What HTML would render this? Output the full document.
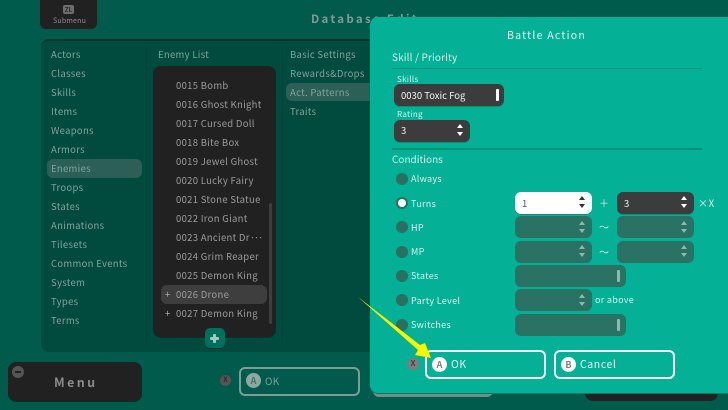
<!DOCTYPE html>
<html><head><meta charset="utf-8"><style>
*{box-sizing:border-box;margin:0;padding:0}
html,body{width:728px;height:410px;overflow:hidden;background:#005b4d}
body{position:relative;font-family:"Noto Sans CJK JP","Liberation Sans",sans-serif;font-size:9.5px;letter-spacing:.3px;-webkit-font-smoothing:antialiased}
.a{position:absolute;white-space:nowrap}
.t{position:absolute;white-space:nowrap;line-height:14px;height:14px}
.l{color:#83a39c}
.e{color:#9b9b9b;left:176px}
.w{color:#d8f3ec}
.s{font-size:9px;letter-spacing:.3px}
.m{font-size:10px;letter-spacing:.15px}
.k{font-size:8px;letter-spacing:.3px}
.box{position:absolute;border-radius:6px;height:22px;background:#2a7264}
.dk{background:#3c3c3c;box-shadow:0 1px 0 #079179}
.r{position:absolute;left:396px;width:12px;height:12px;border-radius:50%;background:#2a6f60}
.u,.d{position:absolute;width:0;height:0;border-left:3px solid transparent;border-right:3px solid transparent}
.u{border-bottom:4px solid #8fb9af}.d{border-top:4px solid #8fb9af}
.bar{position:absolute;width:3px;height:13px;background:#8fb9af;border-radius:1px}
.btn{position:absolute;top:350px;height:29px;border:2px solid #fff;border-radius:6px}
.ci{position:absolute;width:15px;height:15px;border-radius:50%;background:#fff;color:#7d7d7d;font-size:9px;font-weight:700;text-align:center;line-height:15px;letter-spacing:0}
</style></head><body>
<div class="a" style="left:40px;top:-5px;width:57px;height:34px;background:#212121;border-radius:0 0 6px 6px"></div>
<div class="a" style="left:63px;top:5px;width:11px;height:9px;background:#6e6e6e;border-radius:2px;color:#2b2b2b;font-size:6.5px;font-weight:700;line-height:9px;text-align:center;letter-spacing:0">ZL</div>
<div class="t" style="left:53px;top:14px;font-size:7px;letter-spacing:.2px;color:#8e8e8e">Submenu</div>
<div class="t" style="left:311px;top:12px;font-size:11.500px;font-weight:700;letter-spacing:2.3px;color:#7c9d96;line-height:14px">Database Edit</div>

<div class="a" style="left:41px;top:39px;width:340px;height:313px;background:#004a3e;border-radius:8px;border-top:2px solid #00352c"></div>
<div class="a" style="left:146px;top:46px;width:1px;height:298px;background:#00443a"></div>
<div class="a" style="left:282px;top:46px;width:1px;height:298px;background:#00443a"></div>
<div class="a" style="left:47px;top:159px;width:95px;height:19px;background:#2c5f55;border-radius:6px"></div>
<div class="a" style="left:286px;top:83px;width:90px;height:18px;background:#2c5f55;border-radius:6px"></div>

<div class="t l" style="left:51px;top:47px">Actors</div>
<div class="t l" style="left:51px;top:66px">Classes</div>
<div class="t l" style="left:51px;top:85px">Skills</div>
<div class="t l" style="left:51px;top:104px">Items</div>
<div class="t l" style="left:51px;top:123px">Weapons</div>
<div class="t l" style="left:51px;top:142px">Armors</div>
<div class="t l" style="left:51px;top:161px">Enemies</div>
<div class="t l" style="left:51px;top:180px">Troops</div>
<div class="t l" style="left:51px;top:199px">States</div>
<div class="t l" style="left:51px;top:218px">Animations</div>
<div class="t l" style="left:51px;top:237px">Tilesets</div>
<div class="t l" style="left:51px;top:256px">Common Events</div>
<div class="t l" style="left:51px;top:275px">System</div>
<div class="t l" style="left:51px;top:294px">Types</div>
<div class="t l" style="left:51px;top:313px">Terms</div>

<div class="t l" style="left:158px;top:47px">Enemy List</div>
<div class="t l" style="left:290px;top:47px">Basic Settings</div>
<div class="t l" style="left:290px;top:66px">Rewards&amp;Drops</div>
<div class="t l" style="left:290px;top:85px">Act. Patterns</div>
<div class="t l" style="left:290px;top:104px">Traits</div>

<div class="a" style="left:153px;top:66px;width:123px;height:271px;background:#212121;border-radius:8px;box-shadow:0 1px 0 #00352c"></div>
<div class="a" style="left:161px;top:285px;width:106px;height:19px;background:#3e3e3e;border-radius:6px"></div>
<div class="a" style="left:269px;top:203px;width:3px;height:121px;background:#3e3e3e;border-radius:2px"></div>
<div class="t e" style="top:78px">0015 Bomb</div>
<div class="t e" style="top:97px">0016 Ghost Knight</div>
<div class="t e" style="top:116px">0017 Cursed Doll</div>
<div class="t e" style="top:135px">0018 Bite Box</div>
<div class="t e" style="top:154px">0019 Jewel Ghost</div>
<div class="t e" style="top:173px">0020 Lucky Fairy</div>
<div class="t e" style="top:192px">0021 Stone Statue</div>
<div class="t e" style="top:211px">0022 Iron Giant</div>
<div class="t e" style="top:230px">0023 Ancient Dr<span style="letter-spacing:-1.2px">···</span></div>
<div class="t e" style="top:249px">0024 Grim Reaper</div>
<div class="t e" style="top:268px">0025 Demon King</div>
<div class="t e" style="top:287px">0026 Drone</div>
<div class="t e" style="top:306px">0027 Demon King</div>
<div class="t e" style="left:165px;top:287px;color:#b5b5b5">+</div>
<div class="t e" style="left:165px;top:306px;color:#b5b5b5">+</div>
<div class="a" style="left:205px;top:328px;width:20px;height:20px;background:#00705e;border-radius:5px;box-shadow:0 1px 0 #00352c"></div>
<div class="a" style="left:210px;top:337px;width:9px;height:2.500px;background:#a9c5bf;border-radius:1px"></div>
<div class="a" style="left:213.250px;top:333.500px;width:2.500px;height:9px;background:#a9c5bf;border-radius:1px"></div>

<div class="a" style="left:8px;top:362px;width:134px;height:39px;background:#212121;border-radius:8px;box-shadow:0 1px 0 #00352c"></div>
<div class="a" style="left:12px;top:366px;width:12px;height:12px;border-radius:50%;background:#555"></div>
<div class="a" style="left:15px;top:371px;width:6px;height:2px;background:#222"></div>
<div class="t" style="left:54px;top:374px;font-size:12.500px;font-weight:700;letter-spacing:2.4px;color:#8a8a8a;line-height:15px;height:15px">Menu</div>
<div class="a" style="left:220px;top:375px;width:11px;height:11px;border-radius:50%;background:#555;color:#2b2b2b;font-size:7px;font-weight:700;line-height:11px;text-align:center;letter-spacing:0">X</div>
<div class="a" style="left:239px;top:367px;width:121px;height:29px;border:2px solid #7c9d96;border-radius:6px"></div>
<div class="ci" style="left:246px;top:373px;background:#8ba8a2;color:#4d6f68">A</div>
<div class="t" style="left:265px;top:374px;color:#7c9d96;font-size:10px">OK</div>
<div class="a" style="left:373px;top:385px;width:120px;height:12px;background:#6f8f88;border-radius:6px"></div>
<div class="a" style="left:585px;top:385px;width:133px;height:16px;background:#212121;border-radius:8px"></div>

<div class="a" style="left:370px;top:17px;width:370px;height:376px;background:#04b096;border-radius:8px;box-shadow:0 1px 0 #067a68"></div>
<div class="t" style="left:507px;top:28.500px;font-size:10.500px;letter-spacing:1.250px;color:#e6f8f4">Battle Action</div>
<div class="t w m" style="left:392px;top:50px">Skill / Priority</div>
<div class="a" style="left:392px;top:68px;width:310px;height:1px;background:#079079"></div>
<div class="t w k" style="left:397px;top:72.500px">Skills</div>
<div class="box dk" style="left:394px;top:84px;width:110px"></div>
<div class="t" style="left:401px;top:88px;color:#f2f2f2;letter-spacing:0">0030 Toxic Fog</div>
<div class="bar" style="left:496px;top:89px;background:#fff;height:12px"></div>
<div class="t w k" style="left:397px;top:107.500px">Rating</div>
<div class="box dk" style="left:394px;top:120px;width:76px"></div>
<div class="t" style="left:401px;top:123px;color:#f2f2f2">3</div>
<div class="u" style="left:457px;top:124px;border-bottom-color:#fff"></div><div class="d" style="left:457px;top:132px;border-top-color:#fff"></div>
<div class="a" style="left:392px;top:148px;width:310px;height:2px;background:#079079"></div>
<div class="t w m" style="left:392px;top:152px;letter-spacing:0">Conditions</div>

<div class="r" style="top:172.500px"></div><div class="t w s" style="left:411px;top:171.500px">Always</div>
<div class="r" style="top:196.500px"></div><div class="a" style="left:398px;top:198.500px;width:8px;height:8px;background:#fff;border-radius:50%"></div><div class="t w s" style="left:411px;top:196.500px">Turns</div>
<div class="r" style="top:221px"></div><div class="t w s" style="left:411px;top:220.500px">HP</div>
<div class="r" style="top:245.500px"></div><div class="t w s" style="left:411px;top:245px">MP</div>
<div class="r" style="top:270px"></div><div class="t w s" style="left:411px;top:269px">States</div>
<div class="r" style="top:294px"></div><div class="t w s" style="left:411px;top:293.500px">Party Level</div>
<div class="r" style="top:318.500px"></div><div class="t w s" style="left:411px;top:317.500px">Switches</div>

<div class="box" style="left:515px;top:192px;width:77px;background:#fff;box-shadow:0 1px 0 #079179"></div>
<div class="t" style="left:522px;top:196px;color:#555">1</div>
<div class="u" style="left:579px;top:196px;border-bottom-color:#333"></div><div class="d" style="left:579px;top:204px;border-top-color:#333"></div>
<div class="box dk" style="left:617px;top:192px;width:77px"></div>
<div class="t" style="left:624px;top:196px;color:#eee">3</div>
<div class="u" style="left:681px;top:196px;border-bottom-color:#fff"></div><div class="d" style="left:681px;top:204px;border-top-color:#fff"></div>
<div class="t w" style="left:599px;top:196px;font-size:10px;letter-spacing:0">＋</div>
<div class="t w" style="left:698px;top:196px;font-size:10px;letter-spacing:.5px">×X</div>

<div class="box" style="left:515px;top:216px;width:77px"></div><div class="u" style="left:579px;top:221px"></div><div class="d" style="left:579px;top:229px"></div>
<div class="box" style="left:617px;top:216px;width:77px"></div><div class="u" style="left:681px;top:221px"></div><div class="d" style="left:681px;top:229px"></div>
<div class="t w" style="left:599px;top:220px;font-size:10px;letter-spacing:0">～</div>
<div class="box" style="left:515px;top:241px;width:77px"></div><div class="u" style="left:579px;top:245px"></div><div class="d" style="left:579px;top:253px"></div>
<div class="box" style="left:617px;top:241px;width:77px"></div><div class="u" style="left:681px;top:245px"></div><div class="d" style="left:681px;top:253px"></div>
<div class="t w" style="left:599px;top:245px;font-size:10px;letter-spacing:0">～</div>
<div class="box" style="left:515px;top:265px;width:111px"></div><div class="bar" style="left:617px;top:270px;height:12px"></div>
<div class="box" style="left:515px;top:289px;width:77px"></div><div class="u" style="left:579px;top:294px"></div><div class="d" style="left:579px;top:302px"></div>
<div class="t w s" style="left:595px;top:293px">or above</div>
<div class="box" style="left:515px;top:314px;width:111px"></div><div class="bar" style="left:617px;top:319px;height:12px"></div>

<div class="a" style="left:407px;top:358px;width:12px;height:12px;border-radius:50%;background:#7d7d7d;color:#444;font-size:8px;font-weight:700;line-height:12px;text-align:center;letter-spacing:0">X</div>
<div class="btn" style="left:425px;width:121px"></div>
<div class="ci" style="left:432px;top:357px">A</div>
<div class="t" style="left:451px;top:358px;color:#e6f8f4;font-size:10.500px;letter-spacing:.6px">OK</div>
<div class="btn" style="left:554px;width:121px"></div>
<div class="ci" style="left:561px;top:357px">B</div>
<div class="t" style="left:580px;top:358px;color:#e6f8f4;font-size:10.500px;letter-spacing:.6px">Cancel</div>

<svg class="a" style="left:0;top:0" width="728" height="410"><path d="M358 297 L420 345 L425 343 L431 358 L415 355 L418 350 Z" fill="#f6f600"/></svg>
</body></html>
